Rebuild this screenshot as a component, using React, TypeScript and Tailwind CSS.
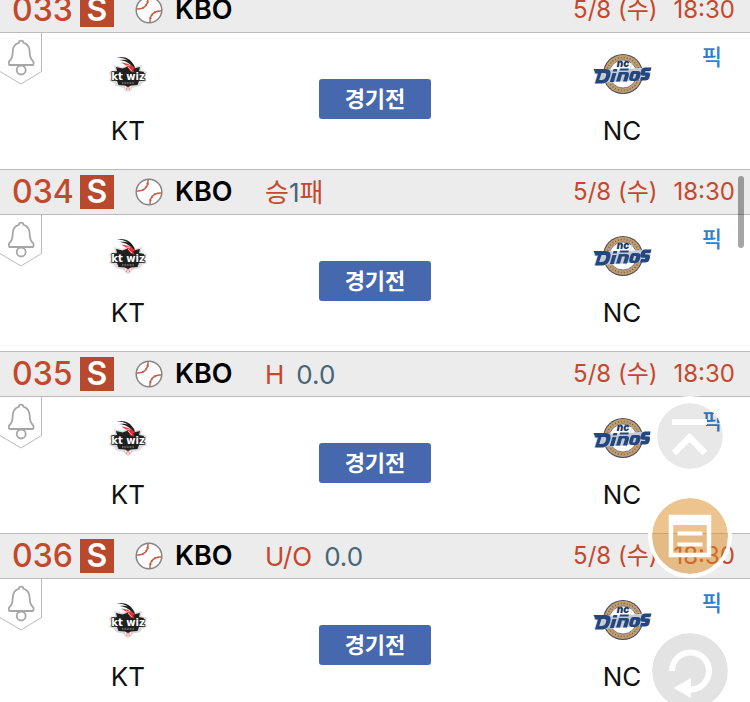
import type { ReactNode } from 'react'

type Part = { text: string; tone: 'red' | 'slate' }

const games: { no: string; gap: string; parts: Part[] }[] = [
  { no: '033', gap: '', parts: [] },
  {
    no: '034',
    gap: '',
    parts: [
      { text: '승', tone: 'red' },
      { text: '1', tone: 'slate' },
      { text: '패', tone: 'red' },
    ],
  },
  {
    no: '035',
    gap: 'gap-3',
    parts: [
      { text: 'H', tone: 'red' },
      { text: '0.0', tone: 'slate' },
    ],
  },
  {
    no: '036',
    gap: 'gap-3',
    parts: [
      { text: 'U/O', tone: 'red' },
      { text: '0.0', tone: 'slate' },
    ],
  },
]

const tones = { red: 'text-[#c4492c]', slate: 'text-[#456579]' }

function Baseball() {
  return (
    <svg viewBox="0 0 28 28" className="size-7 shrink-0" fill="none" aria-hidden="true">
      <circle cx="14" cy="14" r="12.8" fill="#fff" stroke="#858585" strokeWidth="1.5" />
      <path d="M13 2c.3 7-4 11.400-11 11" stroke="#cf5a42" strokeWidth="1.500" />
      <path d="M15 26c-.3-7 4-11.400 11-11" stroke="#cf5a42" strokeWidth="1.500" />
      <path
        d="M11.500 5.500l2.500.7M10 8.500l2 1.500M7.300 11l1.200 2M16.500 22.500l-2.500-.7M18 19.500L16 18M20.700 17l-1.200-2"
        stroke="#cf5a42"
        strokeWidth="1"
      />
    </svg>
  )
}

function BellTag() {
  return (
    <svg viewBox="0 0 42 52" className="block h-[52px] w-[42px]" fill="none" aria-hidden="true">
      <path d="M41.5 0v38.5L21 51 0 38.5" stroke="#b9b9b9" />
      <path
        d="M19 9.600c0-2.600 4.400-2.600 4.400 0 4.200 1.200 6.300 4.600 6.300 9.400 0 5.400 1 7.200 3.400 9.200.7.600.7 3.800-.2 3.800H9.500c-.9 0-.9-3.200-.2-3.800 2.400-2 3.400-3.800 3.400-9.200 0-4.800 2.100-8.200 6.300-9.400z"
        stroke="#a6a6a6"
        strokeWidth="1.800"
      />
      <circle cx="21.200" cy="37" r="4.500" fill="#fff" stroke="#a6a6a6" strokeWidth="1.800" />
    </svg>
  )
}

function WizLogo() {
  return (
    <svg viewBox="0 0 38 36" className="h-9 w-[38px] overflow-visible" role="img" aria-label="KT wiz">
      <path
        d="M5 9l8 2 6-2 6 2 8-2-1 5 6 2-2 5 2 4-5 2-2 3-8 2-4 4-4-4-8-2-2-3-5-2 2-4-2-5 6-2z"
        fill="#dadada"
      />
      <circle cx="19" cy="31.500" r="3.500" fill="#f9eded" stroke="#d9a3a3" strokeWidth=".5" />
      <path d="M17.500 29q1.500 2.500 0 5M20.500 29q-1.500 2.500 0 5" fill="none" stroke="#df4d52" strokeWidth=".7" />
      <path d="M7 11l6.500 1.500 5.500-2 5.500 2L31 11l-1 4 5 1-1 4 1 4-5 1-1.500 4-6.500.5-3 1.500-3-1.500-6.500-.5L8 25l-5-1 1-4-1-4 5-1z" fill="#202020" />
      <path d="M7 1.500C15-.5 22 2.500 25.500 10l.5 4c-4-6-9-9.500-16-10 4-.5 7-.5 9 .5C15 2 11 1 7 1.500z" fill="#202020" />
      <path d="M12 6.500c6 .5 11 2.500 14 6.500l-2 .5 1.500 3-4-1-2-3c-2-3-4-4.500-7.500-6z" fill="#e83036" />
      <path d="M19 11l4 4M17 9l4 1" stroke="#fff" strokeWidth=".6" />
      <text
        x="19"
        y="24"
        textAnchor="middle"
        fill="#fff"
        stroke="#202020"
        strokeWidth="1.500"
        paintOrder="stroke"
        className="font-['DejaVu_Sans'] text-[10px] font-bold"
      >
        kt wiz
      </text>
      <path d="M13 27h12" stroke="#a9a9a9" strokeWidth="1" strokeDasharray="1 .6" />
    </svg>
  )
}

function DinosLogo() {
  return (
    <svg viewBox="0 0 60 42" className="h-[42px] w-[60px]" role="img" aria-label="NC Dinos">
      <circle cx="31" cy="21" r="20" fill="#4a4d58" />
      <circle cx="31" cy="21" r="19" fill="#c29d70" />
      <circle cx="31" cy="21" r="16.500" fill="none" stroke="#75604a" strokeWidth="1.500" strokeDasharray="1 2" />
      <circle cx="31" cy="21" r="14" fill="#fff" stroke="#4a4d58" strokeWidth=".7" />
      <path d="M40 10l-6 20M43 15l-4 13" stroke="#e6dfd4" strokeWidth="1" />
      <text x="31" y="14" textAnchor="middle" fill="#173763" className="font-['Inter'] text-[10px] font-black italic">
        nc
      </text>
      <path d="M3 17l13-1 9 1.500 22-2.500 12-.5-1 4 1 1-2 7-14 1-24 2-17 1 3-9-3-1z" fill="#c6ccd6" />
      <path
        d="M1.500 16h12c5 0 6 3 4.500 7.500-1.500 5-4 7-8.500 7H3l3-10H3.500zM9.500 20l-2.300 7h2c3 0 4-1.500 4.800-4 .7-2.200 0-3-1.500-3z"
        fill="#24477f"
        fillRule="evenodd"
      />
      <path
        d="M20.500 20h4l-2.700 9h-4zM21.500 16h4l-.8 2.500h-4zM27 19h7c3 0 3.500 1.500 2.700 4l-1.700 5.500h-4l1.800-6c.3-.8 0-1-.8-1h-2l-2 7h-4zM28 15.500h9l-.7 2h-9zM41 18h4c3.500 0 4.300 1.500 3.300 5-1.100 4-2.500 5-6 5h-1.500c-3.500 0-4.200-1.500-3.200-5 1-3.800 2-5 3.400-5zM42 21l-1.300 4.500H43L44.300 21z"
        fill="#24477f"
        fillRule="evenodd"
      />
      <path d="M59.500 14.500l-1 3.500h-5l-.4 1.500H55c3 0 3.500 1.500 2.600 4.300-.8 2.900-2 3.700-4.600 3.700h-5l1-3.500h4l.3-1.200h-2c-2.500 0-3.400-1.200-2.500-4 .7-3 2-4.300 4.500-4.300z" fill="#24477f" />
    </svg>
  )
}

function Team({ name, children }: { name: string; children: ReactNode }) {
  return (
    <div className="flex w-64 flex-col items-center">
      <div className="flex h-[42px] items-center">{children}</div>
      <p className="mt-4 text-[26px] leading-10 text-[#111]">{name}</p>
    </div>
  )
}

export default function App() {
  return (
    <main className="h-screen overflow-hidden bg-white font-['Inter','Noto_Sans_CJK_KR',sans-serif]">
      {/* List, scrolled part way into the first row */}
      <div className="-mt-[13px]">
        {games.map((g) => (
          <section key={g.no} className="h-[182px]">
            <header className="flex h-[46px] items-center border-y border-[#bcbcbc] bg-[#ececec] pr-[15px] pl-3">
              <span className="w-[68px] text-[32px] font-medium text-[#c4492c]">{g.no}</span>
              <span className="flex size-[34px] items-center justify-center bg-[#b8492d] text-[32px] leading-none font-semibold text-white">
                S
              </span>
              <div className="ml-[21px] flex items-center gap-3">
                <Baseball />
                <h2 className="w-[90px] text-[27px] font-semibold text-black">KBO</h2>
              </div>
              <div className={`flex items-baseline text-[26px] ${g.gap}`}>
                {g.parts.map((p) => (
                  <span key={p.text} className={tones[p.tone]}>
                    {p.text}
                  </span>
                ))}
              </div>
              <time className="ml-auto flex gap-4 text-2xl whitespace-nowrap text-[#c4492c]">
                <span>5/8 (수)</span>
                <span>18:30</span>
              </time>
            </header>

            <div className="relative flex items-start justify-between pt-5">
              <button aria-label="알림" className="absolute top-0 left-0">
                <BellTag />
              </button>
              <Team name="KT">
                <WizLogo />
              </Team>
              <button className="mt-[26px] h-10 w-28 rounded-[3px] bg-[#4668ae] text-[22px] font-bold text-white">
                경기전
              </button>
              <Team name="NC">
                <DinosLogo />
              </Team>
              <a href="#pick" className="absolute top-2 right-7 text-[22px] font-medium text-[#2f7fd0]">
                픽
              </a>
            </div>
          </section>
        ))}
      </div>

      {/* Scroll thumb */}
      <div className="fixed top-[176px] right-[6px] h-[72px] w-[6px] rounded-full bg-black/35" />

      {/* Floating buttons */}
      <button
        aria-label="맨 위로"
        className="fixed top-[396px] right-5 size-20 rounded-full border-[7px] border-white bg-black/9 bg-clip-padding"
      >
        <svg viewBox="0 0 66 66" className="size-full" fill="none" stroke="#fff" aria-hidden="true">
          <path d="M15 19h35" strokeWidth="6" />
          <path d="M17 50l15.500-15.500L48 50" strokeWidth="6.500" />
        </svg>
      </button>
      <button
        aria-label="구매 목록"
        className="fixed top-[494px] right-[18px] size-[84px] rounded-full border-4 border-white bg-[#db891b]/50 bg-clip-padding"
      >
        <svg viewBox="0 0 76 76" className="size-full" fill="none" stroke="#fff" aria-hidden="true">
          <path d="M19 19h38v38H19z" strokeWidth="4.500" />
          <path d="M17 22h42" strokeWidth="10" />
          <path d="M25.500 35.500h25M25.500 46.500h25" strokeWidth="4" />
        </svg>
      </button>
      <button
        aria-label="새로고침"
        className="fixed top-[629px] right-[18px] size-[84px] rounded-full border-4 border-white bg-[#e3e3e3] bg-clip-padding"
      >
        <svg viewBox="0 0 76 76" className="size-full" fill="none" aria-hidden="true">
          <path d="M20 38a18.500 18.500 0 1 1 18.500 18.500" stroke="#fff" strokeWidth="6" />
          <path d="M39 45v20L21.500 55z" fill="#fff" />
        </svg>
      </button>
    </main>
  )
}
